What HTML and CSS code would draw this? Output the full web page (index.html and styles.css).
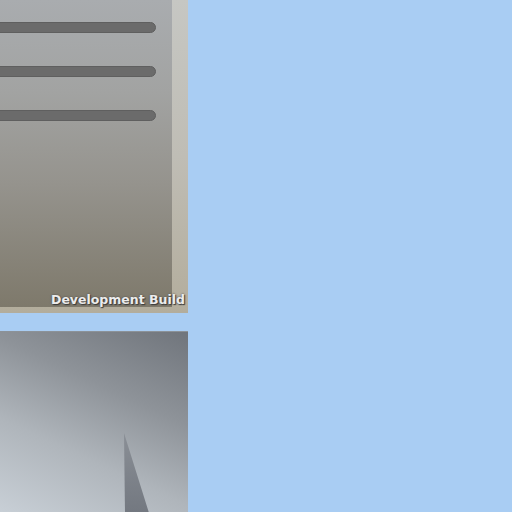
FILE: index.html
```html
<!DOCTYPE html>
<html>
<head>
<meta charset="utf-8">
<link rel="stylesheet" href="styles.css">
</head>
<body>
<div class="column">
  <div class="card top">
    <div class="panel">
      <div class="bars">
        <div class="bar"></div>
        <div class="bar"></div>
        <div class="bar"></div>
      </div>
    </div>
    <div class="label">Development Build</div>
  </div>
  <div class="card bottom">
    <svg class="spike" width="188" height="181" viewBox="0 0 188 181">
      <defs>
        <linearGradient id="sg" x1="0" y1="0" x2="0" y2="1">
          <stop offset="0" stop-color="#8a8f96"/>
          <stop offset="1" stop-color="#737880"/>
        </linearGradient>
      </defs>
      <polygon points="124,101 125,181 149,181" fill="url(#sg)"/>
    </svg>
  </div>
</div>
</body>
</html>
```
FILE: styles.css
```css
html, body {
  margin: 0;
  padding: 0;
  background: #a9cdf3;
  width: 512px;
  height: 512px;
  overflow: hidden;
}
.column {
  width: 188px;
  display: flex;
  flex-direction: column;
  gap: 18px;
}
.card {
  position: relative;
}
.top {
  height: 313px;
  box-sizing: border-box;
  padding: 0 16px 6px 0;
  background: linear-gradient(180deg, #c6c7c3 0%, #bfbdb5 50%, #b3ad9c 100%);
  display: flex;
}
.panel {
  flex: 1;
  background: linear-gradient(180deg, #a9acaf 0%, #a2a3a2 30%, #95938d 60%, #7e796b 100%);
}
.bars {
  display: flex;
  flex-direction: column;
  gap: 33px;
  padding-top: 22px;
}
.bar {
  width: 162px;
  margin-left: -6px;
  height: 11px;
  box-sizing: border-box;
  border-radius: 6px;
  background: #6b6b6b;
  border: 1px solid #5f5f5f;
}
.label {
  position: absolute;
  right: 3px;
  bottom: 6px;
  font-family: "DejaVu Sans", sans-serif;
  font-weight: bold;
  font-size: 12.5px;
  color: #ececec;
  text-shadow: 1px 1px 1px #3a3a3a, 0 0 2px #4a4a4a;
}
.bottom {
  height: 181px;
  background: linear-gradient(205deg, #70757c 0%, #8e9399 35%, #afb5bb 65%, #c8cfd6 100%);
  border-top: 1px solid #8c9298;
  box-sizing: border-box;
}
.spike {
  position: absolute;
  left: 0;
  top: 0;
  display: block;
}
```
